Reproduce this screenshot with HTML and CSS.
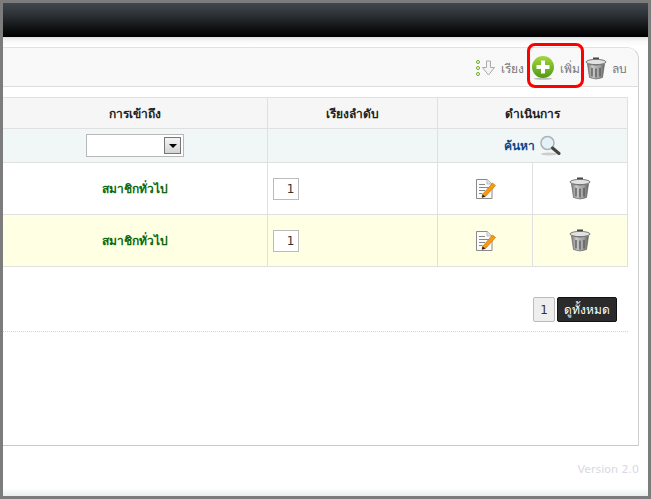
FILE: index.html
```html
<!DOCTYPE html>
<html lang="th">
<head>
<meta charset="utf-8">
<title>จัดการสมาชิก</title>
<link rel="stylesheet" href="styles.css">
</head>
<body>
<svg class="defs" width="0" height="0" aria-hidden="true">
  <defs>
    <linearGradient id="can" x1="0" x2="1" y1="0" y2="0">
      <stop offset="0" stop-color="#7d7d7d"/><stop offset=".3" stop-color="#c8c8c8"/><stop offset=".7" stop-color="#a0a0a0"/><stop offset="1" stop-color="#666"/>
    </linearGradient>
    <linearGradient id="ball" x1="0" x2="0" y1="0" y2="1">
      <stop offset="0" stop-color="#a5d63f"/><stop offset="1" stop-color="#4f9a12"/>
    </linearGradient>
    <symbol id="trash" viewBox="0 0 22 23">
      <rect x="8" y="0.5" width="6" height="3" fill="#444"/>
      <ellipse cx="11" cy="5" rx="10" ry="2.600" fill="#e2e2e2" stroke="#777"/>
      <path d="M2.500 7 L4.500 20.500 Q11 23.500 17.500 20.500 L19.500 7 Q11 10 2.500 7Z" fill="url(#can)" stroke="#666" stroke-width=".7"/>
      <path d="M7 11v8.500M11 11.500v9M15 11v8.500" stroke="#555" stroke-width="1.300" fill="none"/>
    </symbol>
    <symbol id="edit" viewBox="0 0 22 22">
      <path d="M2.500 1.500H13L18 6V20.500H2.500Z" fill="#fbfbfb" stroke="#8a8a8a"/>
      <path d="M13 1.500V6H18" fill="#e4e4e4" stroke="#aaa" stroke-width=".7"/>
      <path d="M5 6.500H11M5 9.500H15M5 12.500H11M5 15.500H8.500" stroke="#888" fill="none"/>
      <path d="M8.500 16.500L18.500 5L21.500 7.500L11.500 18.500L8 19.500Z" fill="#f59a12" stroke="#c56a00" stroke-width=".6"/>
      <path d="M8.500 16.500L8 19.500L11.500 18.500Z" fill="#222"/>
    </symbol>
  </defs>
</svg>
<div class="window">
  <header class="topbar"></header>
  <div class="content">
    <section class="panel">
      <div class="toolbar">
        <a class="tool tool-sort">
          <svg width="20" height="16" viewBox="0 0 20 16">
            <circle cx="2" cy="2" r="1.500" fill="#fff" stroke="#6aa820"/>
            <circle cx="2" cy="8" r="1.500" fill="#fff" stroke="#6aa820"/>
            <circle cx="2" cy="14" r="1.500" fill="#fff" stroke="#6aa820"/>
            <path d="M10.500 1H14.500V7.500H18.500L12.500 15L6.500 7.500H10.500Z" fill="#f4f4f4" stroke="#aaa"/>
          </svg>
          <span>เรียง</span>
        </a>
        <a class="tool tool-add">
          <svg width="22" height="24" viewBox="0 0 22 24">
            <ellipse cx="11" cy="22.800" rx="9" ry="1" fill="#bbb"/>
            <circle cx="11" cy="11" r="11" fill="url(#ball)"/>
            <path d="M11 4.500V17.500M4.500 11H17.500" stroke="#fff" stroke-width="4" fill="none"/>
          </svg>
          <span>เพิ่ม</span>
        </a>
        <a class="tool tool-del">
          <svg width="22" height="23"><use href="#trash"/></svg>
          <span>ลบ</span>
        </a>
      </div>
      <div class="table-wrap">
        <table class="grid">
          <colgroup>
            <col class="c-access"><col class="c-order"><col class="c-edit"><col class="c-del">
          </colgroup>
          <thead>
            <tr class="head">
              <th>การเข้าถึง</th>
              <th>เรียงลำดับ</th>
              <th colspan="2">ดำเนินการ</th>
            </tr>
            <tr class="filter">
              <td>
                <div class="select-wrap">
                  <select class="select"><option></option></select>
                  <span class="select-arrow"></span>
                </div>
              </td>
              <td></td>
              <td colspan="2">
                <span class="search">ค้นหา
                  <svg width="22" height="21" viewBox="0 0 22 21">
                    <ellipse cx="10" cy="19" rx="8" ry="1.500" fill="#ccc"/>
                    <circle cx="8.500" cy="8" r="6.500" fill="#e4f1f6" stroke="#a9b4b8" stroke-width="1.500"/>
                    <path d="M13.500 13L20 18.500" stroke="#444" stroke-width="3" stroke-linecap="round"/>
                  </svg>
                </span>
              </td>
            </tr>
          </thead>
          <tbody>
            <tr class="row">
              <td class="member">สมาชิกทั่วไป</td>
              <td class="order"><input class="order-input" value="1"></td>
              <td class="act"><svg width="22" height="22"><use href="#edit"/></svg></td>
              <td class="act"><svg width="22" height="23"><use href="#trash"/></svg></td>
            </tr>
            <tr class="row alt">
              <td class="member">สมาชิกทั่วไป</td>
              <td class="order"><input class="order-input" value="1"></td>
              <td class="act"><svg width="22" height="22"><use href="#edit"/></svg></td>
              <td class="act"><svg width="22" height="23"><use href="#trash"/></svg></td>
            </tr>
          </tbody>
        </table>
      </div>
      <nav class="pager">
        <a class="page">1</a>
        <a class="view-all">ดูทั้งหมด</a>
      </nav>
    </section>
    <footer class="footer">Version 2.0</footer>
  </div>
  <div class="callout"></div>
</div>
</body>
</html>
```
FILE: styles.css
```css
* { box-sizing: border-box; }
html, body { margin: 0; padding: 0; }
body {
  width: 651px;
  height: 499px;
  overflow: hidden;
  background: #fff;
  font-family: Tahoma, "Noto Sans", "DejaVu Sans", sans-serif;
  font-size: 12px;
}
.defs { position: absolute; }
.window {
  position: relative;
  width: 651px;
  height: 499px;
  border: 3px solid #7c7c7c;
  background: #fff;
  display: flex;
  flex-direction: column;
  overflow: hidden;
}
.topbar {
  height: 34px;
  flex: none;
  background: linear-gradient(#41474d 0, #30353a 30%, #0c0d0e 80%, #000 100%);
}
.content {
  flex: 1;
  display: flex;
  flex-direction: column;
  padding: 10px 9px 0 0;
  background:
    linear-gradient(#e0e0e0 0, #f8f8f8 4px, #fff 9px) top / 100% 10px no-repeat,
    linear-gradient(#fff, #e9efef) bottom / 100% 8px no-repeat,
    #fff;
}
.panel {
  height: 399px;
  flex: none;
  border: 1px solid #c8c8c8;
  border-left: 0;
  border-top-color: #e2e2e2;
  border-right-color: #d0d0d0;
  border-top-right-radius: 12px;
  background: #fff;
  display: flex;
  flex-direction: column;
}
.toolbar {
  height: 39px;
  flex: none;
  display: flex;
  justify-content: flex-end;
  align-items: center;
  padding: 2px 11px 0 0;
  color: #777;
  border-bottom: 1px solid #ddd;
  border-top-right-radius: 12px;
  background: repeating-conic-gradient(#f6f6f6 0 25%, #fbfbfb 0 50%) 0 0 / 2px 2px;
}
.tool { display: flex; align-items: center; }
.tool-sort { gap: 5px; margin-right: 8px; }
.tool-add { gap: 6px; margin-right: 5px; }
.tool-del { gap: 5px; }
.table-wrap { padding: 10px 0 0 0; }
.grid {
  width: 624px;
  border-collapse: collapse;
  table-layout: fixed;
}
.c-access { width: 264px; }
.c-order { width: 170px; }
.c-edit { width: 95px; }
.c-del { width: 95px; }
.grid th, .grid td {
  border: 1px solid #e0e0e0;
  text-align: center;
  padding: 0;
}
.grid tr > :first-child { border-left: 0; }
.head { height: 31px; }
.head th {
  color: #222;
  font-size: 12px;
  font-weight: bold;
  background: repeating-conic-gradient(#f3f3f3 0 25%, #f8f8f8 0 50%) 0 0 / 2px 2px;
}
.filter { height: 34px; }
.filter td {
  background: repeating-conic-gradient(#eef5f4 0 25%, #f3f9f8 0 50%) 0 0 / 2px 2px;
}
.select-wrap {
  position: relative;
  width: 98px;
  height: 23px;
  margin-left: 83px;
}
.select {
  width: 100%;
  height: 100%;
  display: block;
  appearance: none;
  background: #fff;
  border: 1px solid #b8b8b8;
  border-radius: 0;
}
.select-arrow {
  position: absolute;
  top: 3px;
  right: 3px;
  width: 17px;
  height: 17px;
  border: 1px solid #777;
  background: linear-gradient(#f4f4f4, #d4d4d4);
}
.select-arrow::after {
  content: "";
  position: absolute;
  left: 4px;
  top: 6px;
  border: 4px solid transparent;
  border-top: 4px solid #000;
  border-bottom: 0;
}
.search {
  display: inline-flex;
  align-items: center;
  gap: 4px;
  color: #0a4a8a;
  font-weight: bold;
}
.row { height: 52px; }
.alt td { background: #ffffe3; }
.member { color: #0b6a0b; font-weight: bold; }
.order { text-align: left !important; padding-left: 5px !important; }
.order-input {
  display: block;
  width: 26px;
  height: 22px;
  border: 1px solid #bbb;
  background: #fff;
  padding: 0 3px 0 0;
  text-align: right;
  color: #333;
  font: 12px "DejaVu Sans", sans-serif;
}
.act svg { display: block; margin: 0 auto; }
.pager {
  display: flex;
  justify-content: flex-end;
  gap: 2px;
  margin: 30px 10px 0 0;
  padding: 0 11px 10px 0;
  position: relative;
}
.pager::after {
  content: "";
  position: absolute;
  left: 0;
  right: 0;
  bottom: 0;
  border-bottom: 1px dotted #d4d4d4;
}
.page {
  width: 22px;
  height: 25px;
  display: flex;
  align-items: center;
  justify-content: center;
  background: #eee;
  border: 1px solid #bbb;
  border-radius: 2px;
  color: #333;
  font-family: "DejaVu Sans", sans-serif;
}
.view-all {
  width: 60px;
  height: 25px;
  display: flex;
  align-items: center;
  justify-content: center;
  background: #2b2b2b;
  border: 1px solid #111;
  border-radius: 2px;
  color: #fff;
}
.footer {
  padding-top: 17px;
  text-align: right;
  color: #d8d8e0;
  font: 11px "DejaVu Sans", sans-serif;
}
.callout {
  position: absolute;
  left: 524px;
  top: 40px;
  width: 57px;
  height: 45px;
  border: 3px solid #f00;
  border-radius: 8px;
}
```
